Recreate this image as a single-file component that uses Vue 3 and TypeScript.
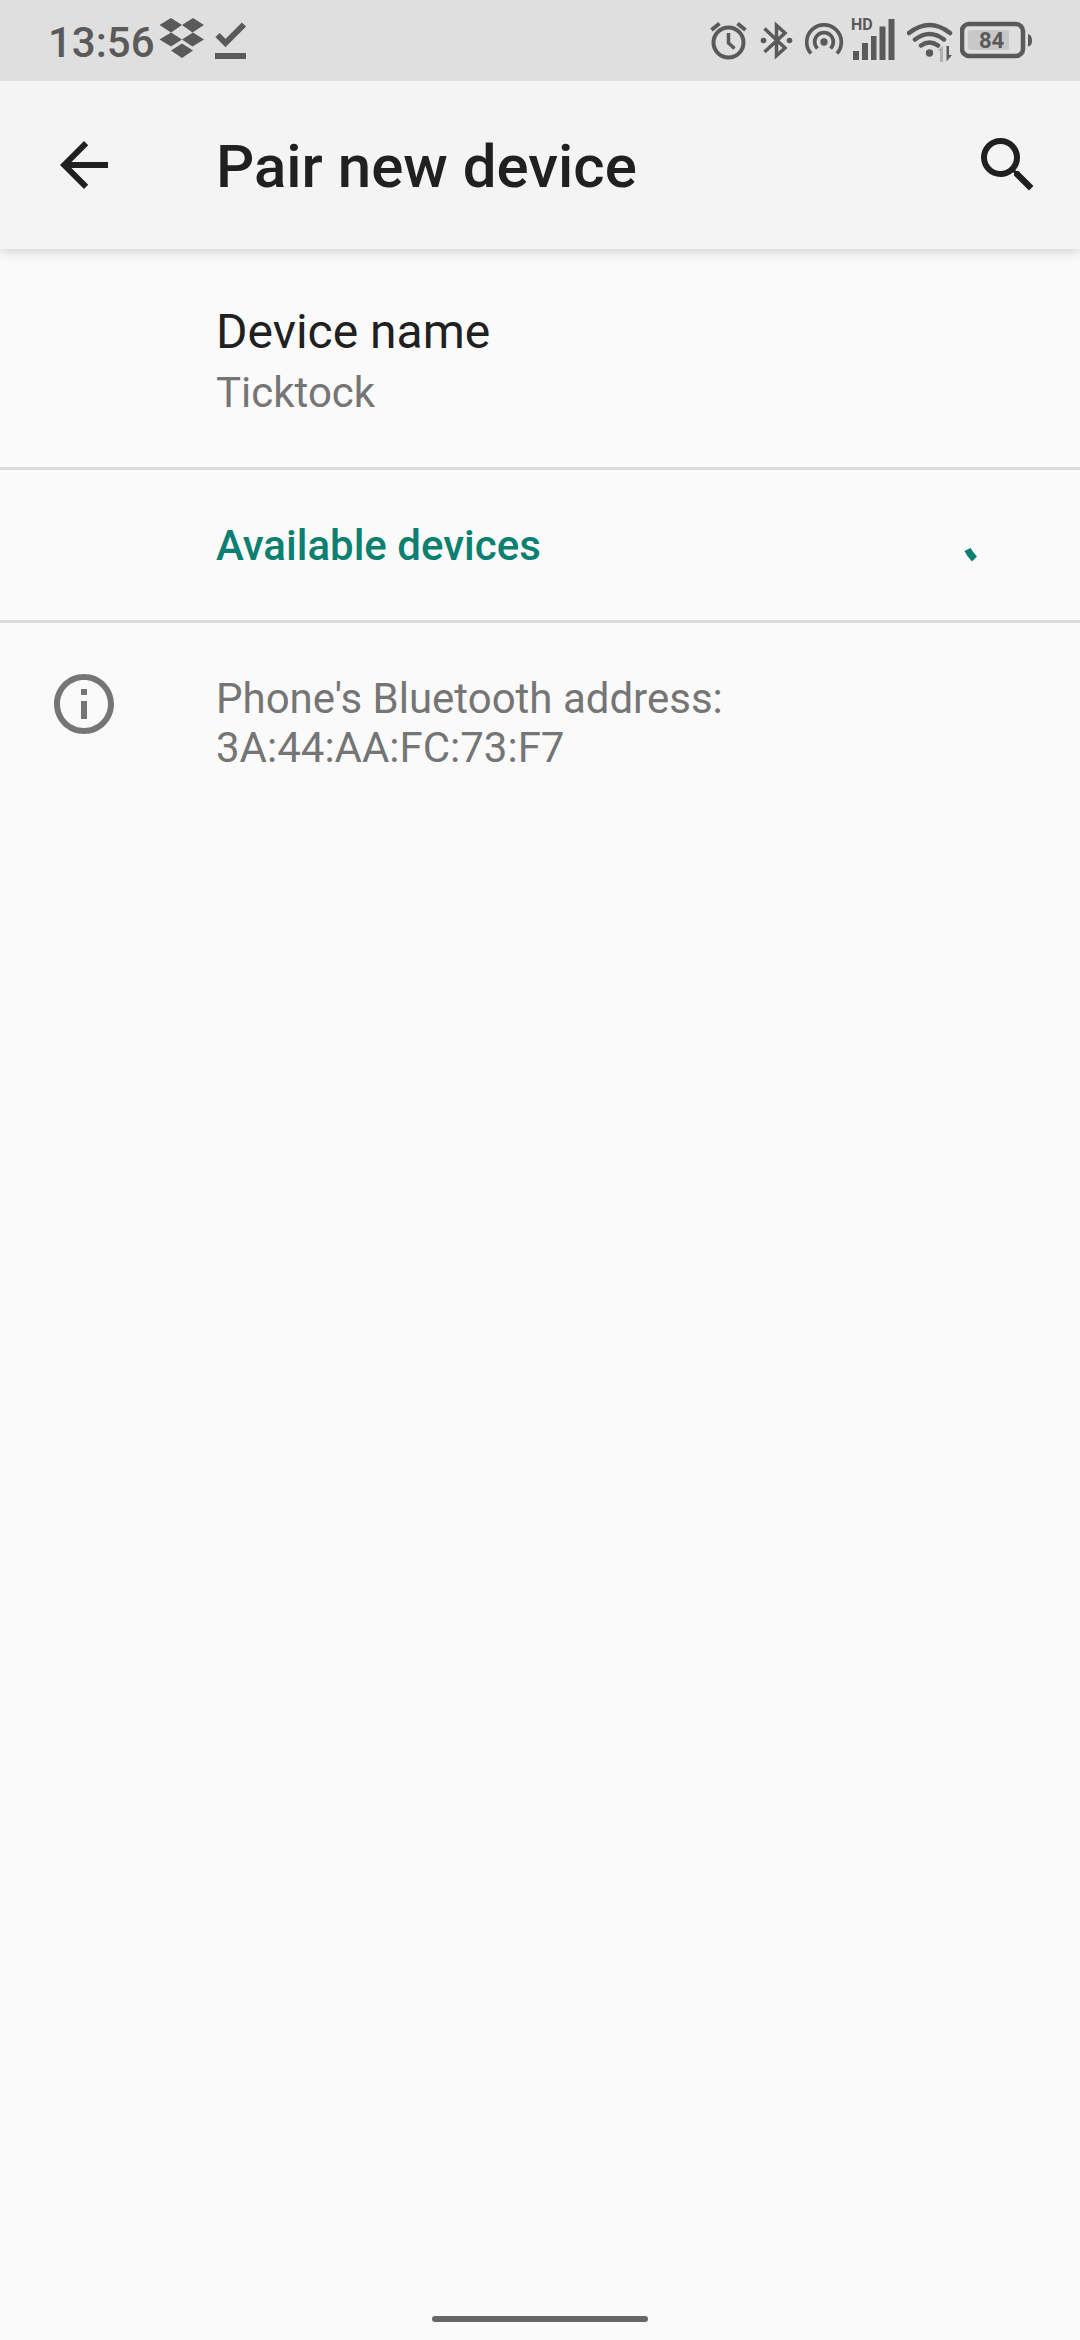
<script setup lang="ts">
import { ref } from 'vue'

const time = ref('13:56')
const battery = ref(84)
const deviceName = ref('Ticktock')
const address = ref('3A:44:AA:FC:73:F7')
</script>

<template>
  <div class="screen">
    <div class="status">
      <span class="time">{{ time }}</span>
      <svg class="dropbox" width="46" height="81" viewBox="159 0 46 81" aria-hidden="true">
        <path d="M171 18l11 7-11 7.500-11.500-7.500zM193 18l11 7-11.500 7.500-10.500-7.500zM171 32.500l11 7-11 7-11.500-7zM193 32.500l11 7-11.500 7-10.500-7zM182 43.500l11 7-11 7.500-11-7.500z" />
      </svg>
      <svg width="32" height="81" viewBox="215 0 32 81" aria-hidden="true">
        <path class="line" stroke-width="6" d="M217.500 35l8 8L244 24.500" />
        <path d="M215 53h31v6h-31z" />
      </svg>
      <span class="spacer"></span>
      <svg class="gap-l" width="38" height="81" viewBox="710 0 38 81" aria-hidden="true">
        <circle class="line" cx="728.500" cy="42.500" r="15" stroke-width="4" />
        <path class="line" stroke-width="4" d="M711.500 30l8-6.500M745.500 30l-8-6.500" />
        <path class="line" stroke-width="3.500" d="M728.500 33v10l6 5.500" />
      </svg>
      <svg class="gap-l" width="33" height="81" viewBox="760 0 33 81" aria-hidden="true">
        <path class="line" stroke-width="3.500" d="M764.500 28.500l20.500 19.500-8.500 7.500v-30l8.500 7.500-20.500 19" />
        <circle cx="763.500" cy="40.500" r="2.800" />
        <circle cx="789.500" cy="40.500" r="2.800" />
      </svg>
      <svg class="gap-l" width="39" height="81" viewBox="805 0 39 81" aria-hidden="true">
        <circle cx="824" cy="42" r="3.700" />
        <path class="line" stroke-width="3.700" d="M811 53.500a17.300 17.300 0 1 1 26 0" />
        <path class="line" stroke-width="3.700" d="M817.500 48.500a9.300 9.300 0 1 1 13 0" />
      </svg>
      <svg class="gap-s" width="44" height="81" viewBox="851 0 44 81" role="img" aria-label="Signal">
        <text class="hd" x="851" y="30">HD</text>
        <path d="M853 51h6v9h-6zM862 43h6v17h-6zM871 36h5.500v24H871zM879.500 26.500h6V60h-6zM888.500 19h6v41h-6z" />
      </svg>
      <svg class="gap-l" width="46" height="81" viewBox="907 0 46 81" aria-hidden="true">
        <path class="line round" stroke-width="4.500" d="M909 33q20.500-16 41 0M915 39.500q14.500-11 29 0M921 45.500q8.500-6 17 0" />
        <circle cx="929.500" cy="53" r="3.700" />
        <path fill="#b0b0b0" d="M938 50l5-4v16h-3V51z" />
        <path d="M946.500 46h2.500v9h3l-5.500 6.500z" />
      </svg>
      <svg class="gap-s" width="73" height="81" viewBox="960 0 73 81" role="img" aria-label="Battery">
        <rect x="968" y="30" width="41" height="20" rx="2" fill="#c8c8c8" />
        <rect class="line" x="962" y="24" width="61" height="32" rx="7" stroke-width="4.500" />
        <path d="M1028 34q4 1 4 6.500t-4 6z" />
        <text class="level" x="979" y="48">{{ battery }}</text>
      </svg>
    </div>

    <header class="bar">
      <button type="button" class="icon-btn" aria-label="Navigate up">
        <svg width="72" height="72" viewBox="0 0 24 24"><path d="M20 11H7.830l5.590-5.590L12 4l-8 8 8 8 1.410-1.410L7.830 13H20z" /></svg>
      </button>
      <h1>Pair new device</h1>
      <button type="button" class="icon-btn" aria-label="Search">
        <svg width="72" height="72" viewBox="0 0 24 24"><path d="M15.500 14h-.79l-.28-.27A6.471 6.471 0 0 0 16 9.500 6.500 6.500 0 1 0 9.500 16c1.610 0 3.090-.59 4.230-1.570l.27.28v.79l5 4.990L20.490 19zm-6 0C7.010 14 5 11.990 5 9.500S7.010 5 9.500 5 14 7.010 14 9.500 11.990 14 9.500 14z" /></svg>
      </button>
    </header>

    <main>
      <section class="row name">
        <div class="label">Device name</div>
        <div class="sub">{{ deviceName }}</div>
      </section>
      <section class="row available">
        <h2>Available devices</h2>
        <svg class="spinner" width="72" height="72" viewBox="0 0 72 72" role="img" aria-label="Searching">
          <path d="M13.500 40.500q2.500 5 7 9.500" />
        </svg>
      </section>
      <section class="row info">
        <svg class="info-icon" width="72" height="72" viewBox="0 0 24 24" aria-hidden="true">
          <path d="M11 7h2v2h-2zm0 4h2v6h-2zm1-9C6.480 2 2 6.480 2 12s4.480 10 10 10 10-4.480 10-10S17.520 2 12 2zm0 18c-4.410 0-8-3.590-8-8s3.590-8 8-8 8 3.590 8 8-3.590 8-8 8z" />
        </svg>
        <p class="sub">Phone's Bluetooth address:<br />{{ address }}</p>
      </section>
    </main>

    <div class="home"></div>
  </div>
</template>

<style>
body {
  background: #fafafa;
}
</style>

<style scoped>
.screen {
  display: flex;
  flex-direction: column;
  min-height: 100vh;
  background: #fafafa;
  color: #202020;
  font-family: Roboto, sans-serif;
}
.status {
  display: flex;
  height: 81px;
  padding: 0 47px 0 48px;
  background: #dfdfdf;
  color: #5a5a5a;
  fill: #5a5a5a;
  z-index: 2;
}
.status svg {
  flex: none;
}
.time {
  padding-top: 2px;
  font-size: 42px;
  font-weight: 500;
  line-height: 81px;
}
.dropbox {
  margin: 0 10px 0 4px;
}
.spacer {
  flex: 1;
}
.gap-l {
  margin-left: 12px;
}
.gap-s {
  margin-left: 7px;
}
.line {
  fill: none;
  stroke: #5a5a5a;
}
.round {
  stroke-linecap: round;
}
.hd {
  font-size: 16px;
  font-weight: 700;
}
.level {
  font-size: 22px;
  font-weight: 700;
}
.bar {
  display: flex;
  align-items: center;
  height: 168px;
  padding: 0 36px 0 48px;
  background: #f4f4f4;
  box-shadow: 0 2px 12px rgba(0, 0, 0, 0.18);
  z-index: 1;
}
.icon-btn {
  flex: none;
  width: 72px;
  height: 72px;
  padding: 0;
  border: 0;
  background: none;
  fill: #202020;
}
.icon-btn svg {
  display: block;
}
h1 {
  flex: 1;
  margin: 0;
  padding: 4px 0 0 96px;
  font-size: 60px;
  font-weight: 500;
  line-height: 72px;
}
main {
  flex: 1;
}
.row {
  padding-left: 216px;
}
.name,
.available {
  border-bottom: 3px solid #dbdbdf;
}
.name {
  padding-top: 55px;
  padding-bottom: 50px;
}
.label {
  margin-bottom: 8px;
  font-size: 48px;
  line-height: 56px;
}
.sub {
  margin: 0;
  color: #757575;
  font-size: 42px;
  line-height: 49px;
}
.available {
  display: flex;
  align-items: center;
  justify-content: space-between;
  height: 150px;
  padding-right: 54px;
}
h2 {
  margin: 0;
  color: #0b8070;
  font-size: 42px;
  font-weight: 500;
  line-height: 49px;
}
.spinner path {
  fill: none;
  stroke: #0b8070;
  stroke-width: 7;
}
.info {
  display: flex;
  gap: 96px;
  padding: 45px 48px;
}
.info .sub {
  padding-top: 6px;
}
.info-icon {
  flex: none;
  fill: #757575;
}
.home {
  width: 20%;
  height: 6px;
  margin: 0 auto 18px;
  border-radius: 3px;
  background: #666;
}
</style>
